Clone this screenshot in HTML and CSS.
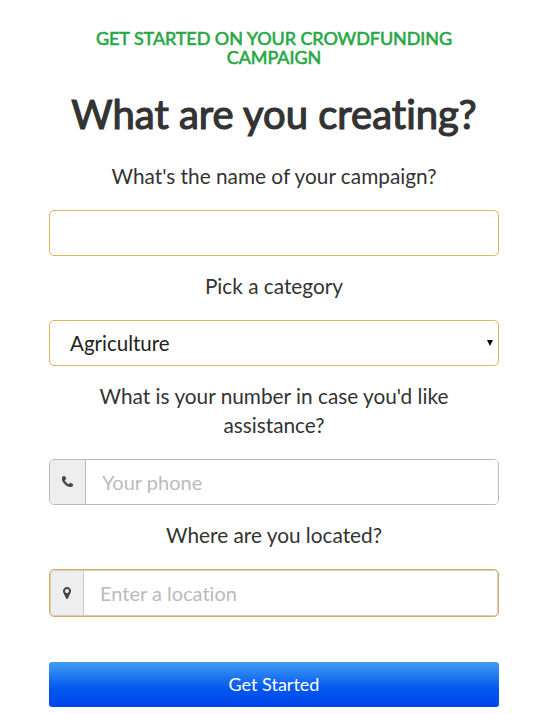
FILE: index.html
```html
<!DOCTYPE html>
<html lang="en">
<head>
  <meta charset="UTF-8" />
  <title>Get Started</title>
  <link rel="stylesheet" href="styles.css">
</head>
<body>

<form class="start-form">
  <h4 class="tagline">GET STARTED ON YOUR CROWDFUNDING CAMPAIGN</h4>
  <h1>What are you creating?</h1>

  <label for="name">What's the name of your campaign?</label>
  <input class="field" id="name" type="text">

  <label for="category">Pick a category</label>
  <div class="field select" id="category">
    <span>Agriculture</span>
    <svg class="arrow" width="6" height="6" viewBox="0 0 6 6"><path d="M0 0h6L3 6z"/></svg>
  </div>

  <label for="phone">What is your number in case you'd like assistance?</label>
  <div class="group phone">
    <span class="addon">
      <svg width="11" height="11" viewBox="0 0 1408 1408"><path fill="#444" stroke="#444" stroke-width="60" d="M1408 1112q0 27-10 70.500t-21 68.500q-21 50-122 106-94 51-186 51-27 0-53-3.500t-57.500-12.500-47-14.500-55.500-20.500-49-18q-98-35-175-83-127-79-264-216t-216-264q-48-77-83-175-3-9-18-49t-20.500-55.500-14.500-47-12.500-57.500-3.500-53q0-92 51-186 56-101 106-122 25-11 68.500-21t70.500-10q14 0 21 3 18 6 53 76 11 19 30 54t35 63.500 31 53.500q3 4 17.500 25t21.500 35.500 7 28.500q0 20-28.500 50t-62 55-62 53-28.500 46q0 9 5 22.500t8.500 20.500 14 24 11.500 19q76 137 174 235t235 174q2 1 19 11.500t24 14 20.500 8.500 22.500 5q18 0 46-28.500t53-62 55-62 50-28.500q14 0 28.500 7t35.500 21.500 25 17.500q25 15 53.500 31t63.500 35 54 30q70 35 76 53 3 7 3 21z"/></svg>
    </span>
    <input id="phone" type="text" placeholder="Your phone">
  </div>

  <label for="location">Where are you located?</label>
  <div class="group location">
    <span class="addon">
      <svg width="8" height="12" viewBox="0 0 1024 1536"><path fill="#444" d="M768 512q0-106-75-181t-181-75-181 75-75 181 75 181 181 75 181-75 75-181zm256 0q0 109-33 179l-364 774q-16 33-47.500 52t-67.500 19-67.500-19-46.500-52l-365-774q-33-70-33-179 0-212 150-362t362-150 362 150 150 362z"/></svg>
    </span>
    <input id="location" type="text" placeholder="Enter a location">
  </div>

  <button class="submit-btn" type="button">Get Started</button>
</form>

</body>
</html>
```
FILE: styles.css
```css
* {
  box-sizing: border-box;
}

body {
  margin: 0;
  background: #fff;
  color: #333;
  font-family: Lato, sans-serif;
  font-size: 20.8px;
  font-variant-ligatures: none;
}

.start-form {
  display: flex;
  flex-direction: column;
  width: 450px;
  margin: 0 0 0 49px;
  padding-top: 29px;
  text-align: center;
}

.tagline {
  margin: 0;
  padding: 0 40px;
  color: #28a745;
  font-size: 18px;
  font-weight: 400;
  line-height: 19px;
  letter-spacing: -0.07px;
  -webkit-text-stroke: 0.6px #28a745;
}

h1 {
  margin: 22px 0 23px;
  font-size: 40px;
  font-weight: 400;
  line-height: 50px;
  -webkit-text-stroke: 1.2px #333;
}

label {
  line-height: 29px;
  margin: -1px 0 20px;
}

.field,
.group {
  width: 100%;
  height: 46px;
  margin: 0 0 16px;
  border: 1px solid #e0b45c;
  border-radius: 5px;
  background: #fff;
}

.select {
  display: flex;
  align-items: center;
  justify-content: space-between;
  padding: 0 5px 0 20px;
  color: #222;
  font-size: 20.5px;
}

.group {
  display: flex;
  overflow: hidden;
  border-color: #bbb;
}

.addon {
  display: flex;
  align-items: center;
  justify-content: center;
  width: 36px;
  border-right: 1px solid #bbb;
  background: #eee;
}

.phone .addon {
  padding-bottom: 2px;
}

.group input {
  flex: 1;
  min-width: 0;
  padding: 0 16px;
  border: 0;
  font: 20px Lato, sans-serif;
  font-variant-ligatures: none;
}

.group input::placeholder {
  color: #bbb;
}

.location {
  height: 48px;
  border-color: #dfab55;
}

.location .addon {
  width: 34px;
  border: 1px solid #ccc;
  border-radius: 4px 0 0 4px;
}

.location input {
  border: 1px solid #ccc;
  border-left: 0;
  border-radius: 0 4px 4px 0;
}

.submit-btn {
  height: 45px;
  margin-top: 29px;
  padding: 0 0 2px;
  border: 0;
  border-radius: 3px;
  background: linear-gradient(#419df3, #0356ee 60%, #0046ec);
  color: #fff;
  font: 18px Lato, sans-serif;
}
```
